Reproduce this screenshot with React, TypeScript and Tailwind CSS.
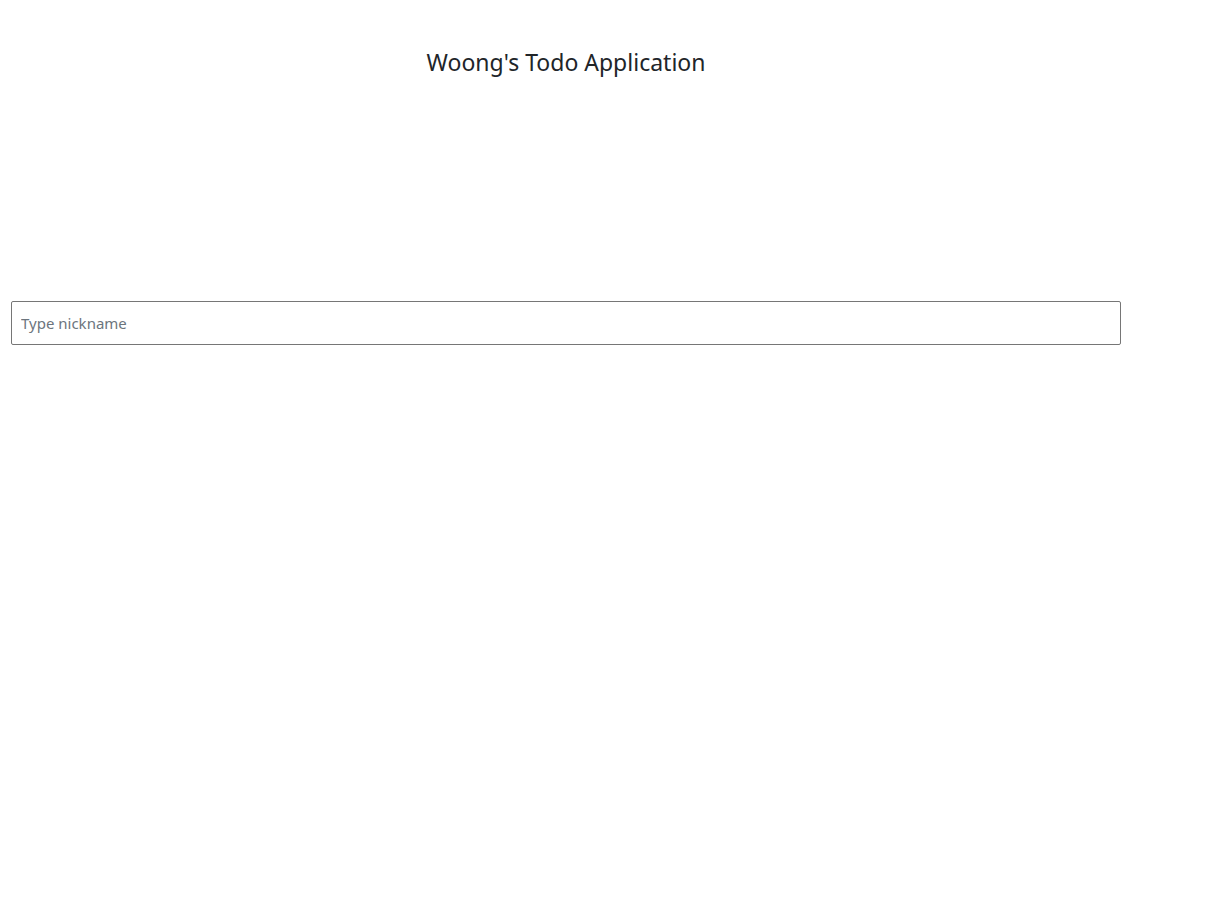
export default function App() {
  return (
    <div className="min-h-screen bg-white" style={{ fontFamily: '"Noto Sans", "Open Sans", sans-serif' }}>
      <div className="w-[1132px] px-[11px]">
        <h1 className="pt-[45px] text-center text-[23px] leading-[34px] text-[#212529]">Woong's Todo Application</h1>
        <div className="mt-[222px]">
          <input
            type="text"
            placeholder="Type nickname"
            className="h-[44px] w-full rounded-[2px] border border-[#767676] px-[9px] text-[15px] text-[#212529] placeholder:text-[#6c757d] outline-none"
          />
        </div>
      </div>
    </div>
  )
}
